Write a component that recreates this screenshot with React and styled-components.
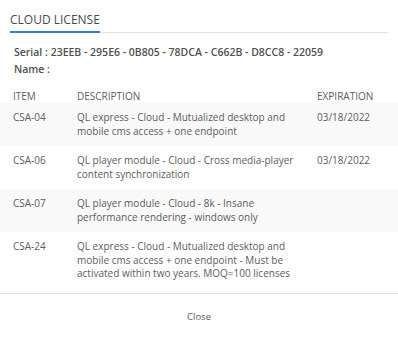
import React from "react";
import styled, { createGlobalStyle } from "styled-components";

const Global = createGlobalStyle`
  html, body { margin: 0; padding: 0; background: #fff; }
  body { font-family: "Open Sans", "Noto Sans", sans-serif; color: #555; }
`;

const Modal = styled.div`
  width: 398px;
  height: 342px;
  background: #fff;
  box-sizing: border-box;
  padding-top: 12px;
`;

const TitleBar = styled.div`
  margin: 0 10px;
  border-bottom: 1px solid #e3e3e3;
  display: flex;
`;

const Title = styled.h2`
  margin: 0 0 -1px;
  font-size: 12px;
  line-height: 16px;
  font-weight: 400;
  color: #4a4a4a;
  padding-bottom: 3px;
  border-bottom: 2px solid #2b7fe0;
`;

const Info = styled.div`
  margin: 11px 0 0;
  padding-left: 14px;
  font-size: 10.5px;
  line-height: 17px;
  font-weight: 600;
  color: #505050;
`;

const Row = styled.div`
  display: grid;
  grid-template-columns: 69px 240px 1fr;
  background: ${(p) => (p.$shaded ? "#f9f9f9" : "#fff")};
  padding: ${(p) => (p.$head ? "11.5px 0 0" : "8px 0")};
  font-size: 10px;
  line-height: 13.5px;
  color: #5c5c5c;
`;

const Cell = styled.div`
  padding: ${(p) => p.$pad};
  text-transform: ${(p) => (p.$head ? "uppercase" : "none")};
`;

const Rows = styled.div`
  padding-bottom: 4px;
  border-bottom: 1px solid #e6e6e6;
`;

const Footer = styled.div`
  display: flex;
  justify-content: center;
  padding-top: 16px;
`;

const CloseButton = styled.button`
  border: none;
  background: none;
  padding: 0;
  font-family: "Open Sans", "Noto Sans", sans-serif;
  font-size: 9.5px;
  line-height: 13px;
  color: #5c5c5c;
  cursor: pointer;
`;

const data = [
  ["CSA-04", "QL express - Cloud - Mutualized desktop and mobile cms access + one endpoint", "03/18/2022"],
  ["CSA-06", "QL player module - Cloud - Cross media-player content synchronization", "03/18/2022"],
  ["CSA-07", "QL player module - Cloud - 8k - Insane performance rendering - windows only", ""],
  ["CSA-24", "QL express - Cloud - Mutualized desktop and mobile cms access + one endpoint - Must be activated within two years. MOQ=100 licenses", ""],
];

const pads = ["0 4px 0 13px", "0 4px 0 8px", "0 8px 0 8px"];

export default function App() {
  return (
    <>
      <Global />
      <Modal>
        <TitleBar>
          <Title>CLOUD LICENSE</Title>
        </TitleBar>
        <Info>
          <div>Serial : 23EEB - 295E6 - 0B805 - 78DCA - C662B - D8CC8 - 22059</div>
          <div>Name :</div>
        </Info>
        <Row $head>
          <Cell $pad={pads[0]} $head>Item</Cell>
          <Cell $pad={pads[1]} $head>Description</Cell>
          <Cell $pad={pads[2]} $head>Expiration</Cell>
        </Row>
        <Rows>
          {data.map((r, i) => (
            <Row key={r[0]} $shaded={i % 2 === 0}>
              <Cell $pad={pads[0]}>{r[0]}</Cell>
              <Cell $pad={pads[1]}>{r[1]}</Cell>
              <Cell $pad={pads[2]}>{r[2]}</Cell>
            </Row>
          ))}
        </Rows>
        <Footer>
          <CloseButton>Close</CloseButton>
        </Footer>
      </Modal>
    </>
  );
}
